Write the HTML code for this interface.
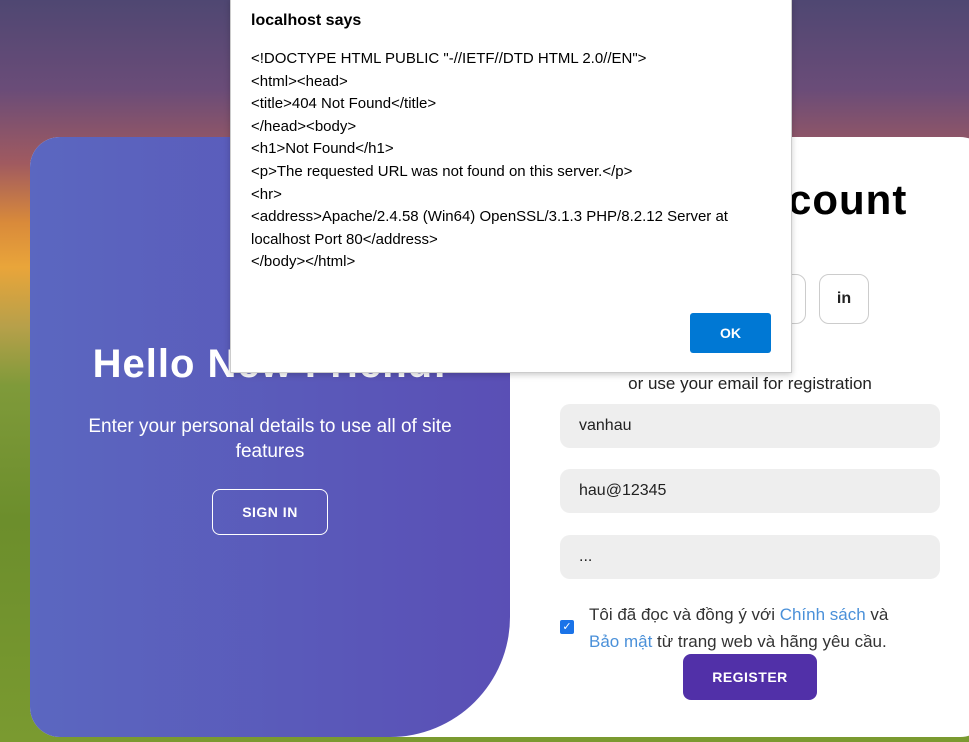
<!DOCTYPE html>
<html><head><meta charset="utf-8"><style>
*{box-sizing:border-box;margin:0;padding:0}
body{width:969px;height:742px;overflow:hidden;position:relative;font-family:"Liberation Sans",sans-serif;
background:linear-gradient(180deg,#4f4772 0%,#6a4c78 12%,#a05a60 22%,#d98a3a 30%,#e9a53a 36%,#b7a04a 44%,#7f9a3a 52%,#6c8e2c 70%,#7a9a30 100%);}
.card{position:absolute;left:30px;top:137px;width:960px;height:600px;background:#fff;border-radius:30px;}
.left{position:absolute;left:30px;top:137px;width:480px;height:600px;border-radius:30px 0 120px 30px;
background:linear-gradient(90deg,#5b67c0,#5a4fb5);color:#fff;text-align:center}
.left h1{position:absolute;top:205px;left:0;width:100%;font-size:40px;font-weight:600;letter-spacing:1px}
.left p{position:absolute;top:277px;left:30px;width:420px;font-size:19px;line-height:25px}
.si{position:absolute;left:182px;top:352px;width:116px;height:46px;border:1px solid #fff;border-radius:8px;font-size:14px;font-weight:bold;line-height:44px;letter-spacing:.5px}
.title{position:absolute;left:788px;top:176px;font-size:42px;font-weight:600;color:#000;letter-spacing:1px}
.soc{position:absolute;top:274px;width:50px;height:50px;border:1px solid #ccc;border-radius:10px;text-align:center;line-height:48px;font-weight:bold;font-size:16px;color:#222}
.or{position:absolute;left:560px;width:380px;top:374px;text-align:center;font-size:17px;color:#222}
.inp{position:absolute;left:560px;width:380px;height:44px;background:#eee;border-radius:10px;padding-left:19px;line-height:44px;font-size:16px;color:#222}
.chk{position:absolute;left:560px;top:620px;width:14px;height:14px;background:#1a73e8;border-radius:2px;color:#fff;font-size:11px;line-height:14px;text-align:center}
.terms{position:absolute;left:589px;top:601px;width:345px;font-size:17px;line-height:27px;color:#333}
.terms a{color:#4a90d9}
.reg{position:absolute;left:683px;top:654px;width:134px;height:46px;background:#5130a8;border-radius:8px;color:#fff;font-weight:bold;font-size:14px;text-align:center;line-height:46px;letter-spacing:.5px}
.dlg{position:absolute;left:230px;top:-2px;width:562px;height:375px;background:#fff;border:1px solid #ccc;box-shadow:0 2px 6px rgba(0,0,0,.2)}
.dlg h3{position:absolute;left:20px;top:13px;font-size:16px;font-weight:bold;color:#000}
.dlg pre{position:absolute;left:20px;top:49px;font-family:"Liberation Sans",sans-serif;font-size:15px;line-height:22.6px;color:#000;white-space:pre}
.ok{position:absolute;left:459px;top:314px;width:81px;height:40px;background:#0078d4;border-radius:3px;color:#fff;font-weight:bold;font-size:14px;text-align:center;line-height:40px}
</style></head><body>
<div class="card"></div>
<div class="title">count</div>
<div class="soc" style="left:756px">f</div>
<div class="soc" style="left:819px">in</div>
<div class="or">or use your email for registration</div>
<div class="inp" style="top:404px">vanhau</div>
<div class="inp" style="top:469px">hau@12345</div>
<div class="inp" style="top:535px">...</div>
<div class="chk">✓</div>
<div class="terms">Tôi đã đọc và đồng ý với <a>Chính sách</a> và<br><a>Bảo mật</a> từ trang web và hãng yêu cầu.</div>
<div class="reg">REGISTER</div>
<div class="left"><h1>Hello New Friend!</h1><p>Enter your personal details to use all of site features</p><div class="si">SIGN IN</div></div>
<div class="dlg"><h3>localhost says</h3><pre>&lt;!DOCTYPE HTML PUBLIC "-//IETF//DTD HTML 2.0//EN"&gt;
&lt;html&gt;&lt;head&gt;
&lt;title&gt;404 Not Found&lt;/title&gt;
&lt;/head&gt;&lt;body&gt;
&lt;h1&gt;Not Found&lt;/h1&gt;
&lt;p&gt;The requested URL was not found on this server.&lt;/p&gt;
&lt;hr&gt;
&lt;address&gt;Apache/2.4.58 (Win64) OpenSSL/3.1.3 PHP/8.2.12 Server at
localhost Port 80&lt;/address&gt;
&lt;/body&gt;&lt;/html&gt;</pre><div class="ok">OK</div></div>
</body></html>
